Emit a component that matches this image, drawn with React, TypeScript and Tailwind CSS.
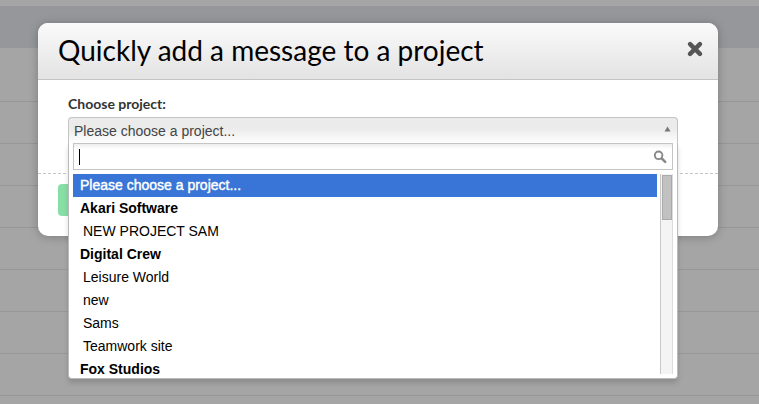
import { useState } from "react";

type Item = { label: string; kind: "placeholder" | "group" | "project" };

const items: Item[] = [
  { label: "Please choose a project...", kind: "placeholder" },
  { label: "Akari Software", kind: "group" },
  { label: "NEW PROJECT SAM", kind: "project" },
  { label: "Digital Crew", kind: "group" },
  { label: "Leisure World", kind: "project" },
  { label: "new", kind: "project" },
  { label: "Sams", kind: "project" },
  { label: "Teamwork site", kind: "project" },
  { label: "Fox Studios", kind: "group" },
];

const itemClass = {
  placeholder: "bg-[#3875d7] pl-[7px] text-white [-webkit-text-stroke:0.4px_white]",
  group: "pl-[7px] font-bold text-black",
  project: "pl-[10px] text-black",
};

function Backdrop() {
  return (
    <div className="h-screen overflow-hidden bg-[#a5a5a5] pt-[6px]" aria-hidden="true">
      <div className="h-[42px] bg-[#96979b]" />
      <div className="h-[54px] border-b border-[#979797]" />
      {[1, 2, 3, 4, 5, 6, 7].map((n) => (
        <div key={n} className="h-[42px] border-b border-[#979797]" />
      ))}
    </div>
  );
}

function CloseIcon() {
  return (
    <svg className="size-4" viewBox="0 0 16 16" aria-hidden="true">
      <path d="M3.1 3.1 12.9 12.9M12.9 3.1 3.1 12.9" stroke="#555" strokeWidth="4.4" strokeLinecap="round" />
    </svg>
  );
}

function SearchIcon() {
  return (
    <svg className="size-[14px]" viewBox="0 0 14 14" fill="none" stroke="#888" aria-hidden="true">
      <circle cx="5.6" cy="5.3" r="3.8" strokeWidth="1.9" />
      <path d="M8.8 8.5 12.2 11.8" strokeWidth="2.5" strokeLinecap="round" />
    </svg>
  );
}

function ProjectDropdown() {
  const [query, setQuery] = useState("");
  return (
    <div className="absolute inset-x-0 top-[26px] z-10 rounded-b-sm border border-t-0 border-[#bbb] bg-white px-1 pb-1 shadow-[0_4px_5px_rgba(0,0,0,0.15)]">
      <div className="relative flex h-[27px] items-center border border-[#c4c4c4] bg-linear-to-b from-[#eee] to-white to-20% pr-[5px]">
        <input
          type="text"
          aria-label="Search projects"
          value={query}
          onChange={(e) => setQuery(e.target.value)}
          className="h-full min-w-0 flex-1 px-[5px] text-sm caret-transparent outline-none"
        />
        <span className="absolute left-[5px] top-[5px] h-4 w-px bg-black" />
        <SearchIcon />
      </div>
      <div className="mt-1 flex h-[200px] gap-[3px]">
        <ul
          role="listbox"
          aria-label="Projects"
          className="min-w-0 flex-1 overflow-y-auto [scrollbar-width:none]"
        >
          {items.map((item) => (
            <li
              key={item.label}
              role="option"
              aria-selected={item.kind === "placeholder"}
              className={`h-[23px] text-sm leading-[23px] ${itemClass[item.kind]}`}
            >
              {item.label}
            </li>
          ))}
        </ul>
        <div className="w-[13px] border-x border-l-[#c8c8c8] border-r-[#dcdcdc] bg-[#f4f4f4] pl-px pt-px" aria-hidden="true">
          <div className="h-[45px] border border-[#aaa] bg-[#c1c1c1]" />
        </div>
      </div>
    </div>
  );
}

export default function App() {
  return (
    <main className="relative h-screen overflow-hidden font-['Liberation_Sans',Arial,sans-serif]">
      <Backdrop />
      <div className="absolute inset-0 pl-[38px] pr-[41px] pt-[23px]">
        <section
          role="dialog"
          aria-labelledby="dialog-title"
          className="rounded-[10px] bg-white shadow-[0_1px_10px_rgba(0,0,0,0.25)]"
        >
          <header className="flex h-[57px] items-center justify-between rounded-t-[10px] border-b border-[#c4c4c4] bg-linear-to-b from-[#fafafa] to-[#e3e3e3] pl-5 pr-[15px]">
            <h1 id="dialog-title" className="pb-[2px] font-[Lato,sans-serif] text-[28px] leading-9 text-black">
              Quickly add a message to a project
            </h1>
            <button type="button" aria-label="Close" className="pb-1">
              <CloseIcon />
            </button>
          </header>
          <form>
            <div className="h-[94px] border-b border-dashed border-[#c4c4c4] px-[30px] pt-[14px] pr-10">
              <label
                htmlFor="project"
                className="block h-[23px] font-[Lato,sans-serif] text-sm font-bold leading-5 text-[#333]"
              >
                Choose project:
              </label>
              <div className="relative">
                <select
                  id="project"
                  className="block h-[27px] w-full appearance-none rounded-t-[4px] border border-b-0 border-[#c4c4c4] bg-linear-to-b from-[#ebebeb] from-40% to-white pl-[5px] text-sm text-[#444] outline-none"
                >
                  <option>Please choose a project...</option>
                </select>
                <svg
                  className="pointer-events-none absolute right-[7px] top-[9px] h-[6px] w-[7px]"
                  viewBox="0 0 7 6"
                  aria-hidden="true"
                >
                  <path d="M3.5 0.5 6.5 5.5H.5Z" fill="#777" />
                </svg>
                <ProjectDropdown />
              </div>
            </div>
            <div className="px-5 pb-5 pt-[10px]">
              <button
                type="submit"
                aria-label="Add message"
                className="block h-8 w-36 rounded-[4px] bg-[#87dfa6]"
              />
            </div>
          </form>
        </section>
      </div>
    </main>
  );
}
